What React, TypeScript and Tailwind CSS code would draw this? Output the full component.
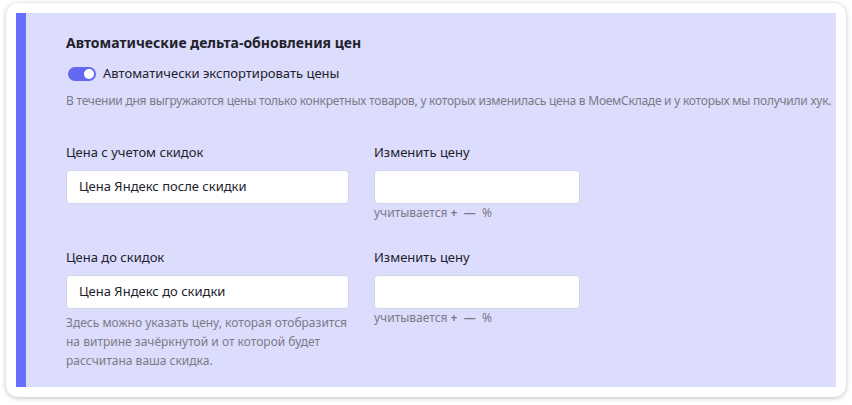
const App = () => {
  return (
    <div className="w-[852px] h-[405px] bg-white pl-[6px] pt-[3px] font-['Noto_Sans',sans-serif]">
      <div className="w-[840px] h-[394px] rounded-xl bg-white p-[10px] shadow-[0_1px_5px_rgba(0,0,0,0.25)]">
        <div className="flex h-full">
          <div className="w-[10px] bg-[#6A6EFF]" />
          <div className="flex-1 bg-[#DCDCFC] pl-10 pt-5">
            <h2 className="h-5 text-[14px] font-bold leading-5 text-[#22222c]">
              Автоматические дельта-обновления цен
            </h2>

            {/* toggle */}
            <div className="mt-[13px] flex h-4 items-center">
              <div className="ml-[2px] flex h-[14px] w-[28px] items-center justify-end rounded-full bg-[#6568F0] pr-[2px]">
                <div className="h-[10px] w-[10px] rounded-full bg-white" />
              </div>
              <span className="ml-[7px] text-[13px] text-[#22222c]">
                Автоматически экспортировать цены
              </span>
            </div>

            <p className="mt-[10px] whitespace-nowrap text-[12px] leading-[18px] tracking-[-0.25px] text-[#7b7b86]">
              В течении дня выгружаются цены только конкретных товаров, у которых изменилась цена в МоемСкладе и у которых мы получили хук.
            </p>

            {/* row 1 */}
            <div className="mt-[33px] flex gap-[25px]">
              <div className="w-[283px]">
                <div className="text-[13px] leading-[18px] text-[#22222c]">Цена с учетом скидок</div>
                <div className="mt-[9px] flex h-[34px] items-center rounded border border-[#d3d4ea] bg-white px-3 text-[13px] text-[#22222c]">
                  Цена Яндекс после скидки
                </div>
              </div>
              <div className="w-[206px]">
                <div className="text-[13px] leading-[18px] text-[#22222c]">Изменить цену</div>
                <div className="mt-[9px] h-[34px] rounded border border-[#d3d4ea] bg-white" />
                <div className="mt-[1px] text-[12px] leading-4 text-[#7b7b86]">
                  учитывается <span className="font-bold">+</span> &nbsp;<span className="font-bold">—</span> &nbsp;%
                </div>
              </div>
            </div>

            {/* row 2 */}
            <div className="mt-[27px] flex gap-[25px]">
              <div className="w-[283px]">
                <div className="text-[13px] leading-[18px] text-[#22222c]">Цена до скидок</div>
                <div className="mt-[9px] flex h-[34px] items-center rounded border border-[#d3d4ea] bg-white px-3 text-[13px] text-[#22222c]">
                  Цена Яндекс до скидки
                </div>
                <p className="mt-[4px] text-[12px] leading-[19px] text-[#7b7b86]">
                  Здесь можно указать цену, которая отобразится
                  <br />
                  на витрине зачёркнутой и от которой будет
                  <br />
                  рассчитана ваша скидка.
                </p>
              </div>
              <div className="w-[206px]">
                <div className="text-[13px] leading-[18px] text-[#22222c]">Изменить цену</div>
                <div className="mt-[9px] h-[34px] rounded border border-[#d3d4ea] bg-white" />
                <div className="mt-[1px] text-[12px] leading-4 text-[#7b7b86]">
                  учитывается <span className="font-bold">+</span> &nbsp;<span className="font-bold">—</span> &nbsp;%
                </div>
              </div>
            </div>
          </div>
        </div>
      </div>
    </div>
  );
};

export default App;
